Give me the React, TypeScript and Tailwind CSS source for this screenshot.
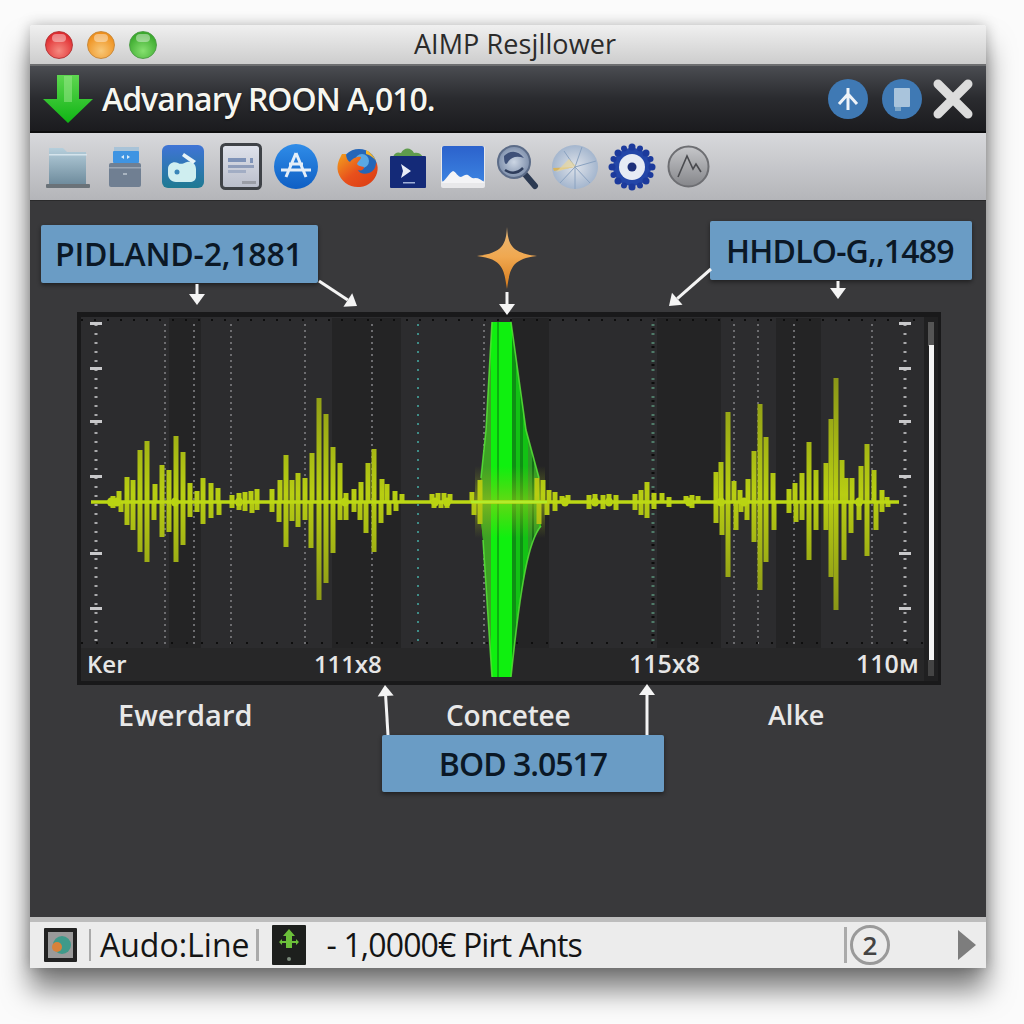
const F = "font-['Open_Sans','Noto_Sans',sans-serif]";

type B = [number, number];
const up: B[] = [[114,496],[120,491],[128,477],[134,480],[141,450],[148,441],[156,484],[163,465],[170,470],[177,436],[184,452],[191,483],[198,491],[204,478],[212,483],[219,488],[233,495],[240,493],[246,492],[252,491],[258,489],[273,489],[281,480],[287,455],[293,480],[299,473],[306,478],[313,453],[320,398],[327,414],[334,447],[341,463],[347,493],[355,489],[362,482],[369,463],[375,449],[383,479],[388,484],[396,491],[403,494],[433,494],[439,493],[445,493],[451,494],[473,492],[481,480],[538,478],[544,480],[550,490],[556,492],[563,496],[569,495],[590,495],[596,494],[604,495],[610,494],[617,495],[636,494],[642,490],[648,482],[655,493],[663,493],[670,497],[687,496],[693,495],[699,496],[717,472],[722,462],[729,412],[735,481],[741,490],[749,479],[755,451],[761,404],[767,437],[774,473],[790,489],[796,483],[803,473],[810,442],[817,470],[827,463],[832,419],[837,378],[843,460],[847,478],[853,478],[862,466],[868,444],[875,470],[883,490],[888,497]];
const down: B[] = [[114,508],[122,512],[128,525],[134,530],[141,552],[148,562],[155,520],[163,537],[170,532],[177,562],[184,545],[191,517],[198,512],[204,524],[212,518],[220,515],[233,508],[240,510],[246,511],[253,513],[258,510],[273,512],[280,522],[287,547],[293,521],[299,527],[306,520],[312,548],[320,600],[327,583],[334,553],[341,520],[347,520],[355,512],[361,520],[367,533],[375,552],[382,523],[390,515],[397,511],[435,508],[442,508],[448,508],[475,515],[481,524],[540,524],[548,515],[556,511],[590,509],[604,509],[617,510],[636,510],[642,515],[648,518],[655,509],[670,507],[693,508],[717,523],[723,535],[729,577],[737,530],[742,512],[748,520],[755,542],[761,590],[767,562],[775,530],[790,513],[797,522],[803,520],[810,560],[817,530],[827,530],[832,577],[837,610],[845,560],[852,533],[860,520],[868,556],[877,530],[883,512],[889,507]];
const bands: [number, number][] = [[170,32],[333,69],[513,37],[658,64],[777,45]];
const gridX = [166,195,232,306,373,485,735,759,795,873];
const scaleBig = [323,368,421,476,553,608];
const GREEN = "M493 322L512 322L527 430L540 478L542 526C530 540 522 580 512 677L493 677L484 540L480 502L482 478L487 430Z";

function Chart() {
  return (
    <svg viewBox="78 312 864 373" className="absolute inset-0 w-full h-full blur-[0.5px]">
      <defs>
        <linearGradient id="bar" gradientUnits="userSpaceOnUse" x1="0" y1="378" x2="0" y2="610">
          <stop offset="0" stopColor="#8a9618" />
          <stop offset="0.5" stopColor="#b8ce12" />
          <stop offset="1" stopColor="#8a9618" />
        </linearGradient>
        <linearGradient id="gA" x1="0" y1="0" x2="0" y2="1">
          <stop offset="0" stopColor="#9ab818" stopOpacity="0" />
          <stop offset="0.5" stopColor="#a8c818" stopOpacity="0.55" />
          <stop offset="1" stopColor="#9ab818" stopOpacity="0" />
        </linearGradient>
        <clipPath id="gc"><path d={GREEN} /></clipPath>
      </defs>
      <rect x="78" y="312" width="864" height="373" fill="#19191a" />
      <rect x="82" y="317" width="843" height="364" fill="#2c2c2e" />
      {bands.map(([x, w]) => <rect key={x} x={x} y="318" width={w} height="330" fill="#242425" />)}
      <rect x="82" y="648" width="843" height="33" fill="#272728" />
      {gridX.map((x) => <line key={x} x1={x} x2={x} y1="324" y2="644" stroke="#6d6d70" strokeWidth="2" strokeDasharray="2 4" />)}
      <line x1="419" x2="419" y1="324" y2="644" stroke="#3f8d88" strokeWidth="2" strokeDasharray="2 7" />
      <line x1="654" x2="654" y1="324" y2="644" stroke="#4f7a68" strokeWidth="3" strokeDasharray="2 7" />
      <line x1="654" x2="654" y1="328" y2="644" stroke="#0d0d0d" strokeWidth="3" strokeDasharray="2 16" />
      <line x1="82" x2="925" y1="320" y2="320" stroke="#0e0e0e" strokeWidth="2" strokeDasharray="2 11" />
      <line x1="82" x2="925" y1="643" y2="643" stroke="#0e0e0e" strokeWidth="2" strokeDasharray="2 13" />
      {[97, 906].map((x) => (
        <g key={x}>
          <line x1={x} x2={x} y1="324" y2="644" stroke="#a9a9ab" strokeWidth="3" strokeDasharray="2 7" />
          {scaleBig.map((y) => <rect key={y} x={x - 6} y={y - 1} width="12" height="3" fill="#c9c9cb" />)}
        </g>
      ))}
      <g clipPath="url(#gc)">
        <rect x="478" y="320" width="68" height="360" fill="#12c214" />
        <rect x="478" y="320" width="14" height="360" fill="#3da324" />
        <rect x="492" y="320" width="21" height="360" fill="#0ff00f" />
        <rect x="498" y="320" width="2" height="360" fill="#0cb010" />
        <rect x="513" y="320" width="4" height="360" fill="#0e8f14" />
        <rect x="521" y="320" width="3" height="360" fill="#0e8f14" />
        <rect x="529" y="320" width="11" height="360" fill="#2d9a26" />
        <rect x="533" y="320" width="2" height="360" fill="#146e18" />
      </g>
      <rect x="476" y="466" width="70" height="72" fill="url(#gA)" />
      <path d="M512 322L527 430L540 478M542 526C530 540 522 580 512 677M482 478L487 430L493 322M484 540L493 677" stroke="#58e038" strokeWidth="1.6" fill="none" opacity="0.85" />
      {up.map(([x, y]) => <rect key={x} x={x - 2.5} y={y} width="5" height={502 - y} fill="url(#bar)" />)}
      {down.map(([x, y]) => <rect key={x} x={x - 2.5} y="502" width="5" height={y - 502} fill="url(#bar)" />)}
      <line x1="92" x2="900" y1="502" y2="502" stroke="#bcd814" strokeWidth="3.5" />
      <line x1="472" x2="548" y1="502" y2="502" stroke="#b4ec2a" strokeWidth="2.5" />
      {[112,118,176,240,346,436,448,566,596,610,690,722,745,860].map((x) => <ellipse key={x} cx={x} cy="502" rx="4" ry="4.5" fill="#b9d412" />)}
      <rect x="925" y="317" width="14" height="364" fill="#202021" />
      <rect x="929" y="322" width="6" height="24" fill="#555" />
      <rect x="930" y="345" width="5" height="315" fill="#f4f4f4" />
      <rect x="929" y="660" width="6" height="16" fill="#444" />
    </svg>
  );
}

function Arrows() {
  const items: [number, number, number, number][] = [
    [197, 284, 197, 305],
    [319, 281, 357, 306],
    [507, 292, 507, 315],
    [711, 269, 669, 306],
    [838, 281, 838, 299],
    [388, 735, 385, 685],
    [647, 735, 647, 684],
  ];
  return (
    <svg viewBox="31 201 954 716" className="absolute inset-0 w-full h-full pointer-events-none">
      {items.map(([a, b, c, d]) => {
        const l = Math.hypot(c - a, d - b);
        const ux = (c - a) / l, uy = (d - b) / l;
        const bx = c - ux * 11, by = d - uy * 11;
        return (
          <g key={a}>
            <line x1={a} y1={b} x2={bx} y2={by} stroke="#f4f4f4" strokeWidth="3" />
            <polygon points={`${c},${d} ${bx - uy * 8},${by + ux * 8} ${bx + uy * 8},${by - ux * 8}`} fill="#f4f4f4" />
          </g>
        );
      })}
    </svg>
  );
}

function Light({ from, to, rim }: { from: string; to: string; rim: string }) {
  return (
    <div className="w-[28px] h-[28px] rounded-full relative border border-solid" style={{ background: `radial-gradient(circle at 50% 72%, ${to}, ${from} 75%)`, borderColor: rim }}>
      <div className="absolute left-[6px] top-[2px] w-[14px] h-[8px] rounded-full bg-white/40" />
    </div>
  );
}

function Star() {
  return (
    <svg viewBox="0 0 60 62" className="w-[60px] h-[62px]">
      <defs>
        <linearGradient id="st" x1="0" y1="0" x2="0" y2="1">
          <stop offset="0" stopColor="#e8b878" />
          <stop offset="0.48" stopColor="#f0a850" />
          <stop offset="1" stopColor="#d67a1a" />
        </linearGradient>
      </defs>
      <path d="M30 0C31 17 34 26 60 29C34 32 33 42 30 62C27 42 26 32 0 29C26 26 29 17 30 0Z" fill="url(#st)" />
    </svg>
  );
}

function ToolIcons() {
  return (
    <div className="flex items-center h-full">
      {/* folder laptop */}
      <svg viewBox="0 0 44 45" className="ml-[16px] w-[44px] h-[45px]">
        <defs><linearGradient id="f1" x1="0" y1="0" x2="0" y2="1"><stop offset="0" stopColor="#b6cfdc" /><stop offset="1" stopColor="#6f8c9d" /></linearGradient></defs>
        <path d="M3 4h14l4 4h19v32H3Z" fill="url(#f1)" />
        <rect x="3" y="10" width="38" height="1.5" fill="#d5e4ec" />
        <rect x="0" y="40" width="44" height="4" rx="1" fill="#6a7278" />
      </svg>
      {/* drive */}
      <svg viewBox="0 0 32 40" className="ml-[19px] w-[32px] h-[40px]">
        <rect x="5" y="0" width="25" height="6" fill="#a8c3d8" />
        <rect x="4" y="4" width="26" height="12" rx="1" fill="#3f94e2" />
        <path d="M12 10l3-2v4ZM18 8l3 2-3 2Z" fill="#dcecf8" />
        <rect x="0" y="16" width="32" height="24" rx="2" fill="#707f92" />
        <rect x="0" y="20" width="32" height="1.5" fill="#9aa6b4" />
        <rect x="14" y="26" width="4" height="2" fill="#a9b4c0" />
      </svg>
      {/* blue tile */}
      <svg viewBox="0 0 42 43" className="ml-[21px] w-[42px] h-[43px]">
        <defs><linearGradient id="t1" x1="0" y1="0" x2="0" y2="1"><stop offset="0" stopColor="#3f74d6" /><stop offset="1" stopColor="#1f7a92" /></linearGradient></defs>
        <rect width="42" height="43" rx="6" fill="url(#t1)" />
        <path d="M6 24c0-6 6-8 10-6 3 2 6 0 9-1 5-1 9 2 9 7v8c0 3-3 5-6 5H14c-5 0-8-4-8-8Z" fill="#cfeef0" />
        <path d="M22 8l12 8-3 3-11-8Z" fill="#e7f3f7" />
        <circle cx="15" cy="27" r="2.5" fill="#3a86b8" />
      </svg>
      {/* doc selected */}
      <svg viewBox="0 0 42 47" className="ml-[16px] w-[42px] h-[47px]">
        <defs><linearGradient id="d1" x1="0" y1="0" x2="0" y2="1"><stop offset="0" stopColor="#e0e3ec" /><stop offset="1" stopColor="#b9bdca" /></linearGradient></defs>
        <rect x="1.5" y="1.5" width="39" height="44" rx="4" fill="url(#d1)" stroke="#3f4247" strokeWidth="3" />
        <rect x="8" y="15" width="18" height="4" fill="#7f93b8" />
        <rect x="8" y="22" width="26" height="3" fill="#8f9dba" />
        <rect x="8" y="27" width="18" height="3" fill="#a2adc4" />
        <rect x="30" y="15" width="3" height="5" fill="#7f93b8" />
        <rect x="22" y="38" width="14" height="3" fill="#9a9da6" />
      </svg>
      {/* app store */}
      <svg viewBox="0 0 44 45" className="ml-[12px] w-[44px] h-[45px]">
        <defs><linearGradient id="a1" x1="0" y1="0" x2="0" y2="1"><stop offset="0" stopColor="#2f8ce8" /><stop offset="1" stopColor="#0f5fc4" /></linearGradient></defs>
        <ellipse cx="22" cy="22.5" rx="22" ry="22.5" fill="url(#a1)" />
        <path d="M22 9L12 33M22 9L32 33M7 26H37M15 20l14 0" stroke="#e4eef8" strokeWidth="3" fill="none" />
      </svg>
      {/* firefox */}
      <svg viewBox="0 0 42 42" className="ml-[18px] w-[42px] h-[42px]">
        <defs><linearGradient id="ff" x1="0" y1="0" x2="1" y2="1"><stop offset="0" stopColor="#f2a21e" /><stop offset="0.5" stopColor="#e8501c" /><stop offset="1" stopColor="#d93a12" /></linearGradient></defs>
        <circle cx="23" cy="21" r="18" fill="#2466b8" />
        <circle cx="26" cy="15" r="7" fill="#5aa8e4" />
        <path d="M6 8C4 12 0 18 2 26c3 10 12 16 22 15 9-1 15-7 17-14 1-4 1-8-1-11 0 5-2 9-7 11-5 2-10 0-11-3 3 1 6 0 6-3-3-1-6-1-7-3 1-3 4-4 4-7-4-1-9 2-11 5-2-1-4-4-4-8Z" fill="url(#ff)" />
        <path d="M30 4c4 2 8 6 10 11-2-3-6-6-10-7Z" fill="#f5b52a" />
      </svg>
      {/* powershell */}
      <svg viewBox="0 0 36 42" className="ml-[12px] w-[36px] h-[42px]">
        <path d="M3 11c2-5 5-5 8-4 3-6 10-6 13 0 3-1 7 0 9 4Z" fill="#5f9c4c" />
        <rect y="10" width="36" height="32" rx="1" fill="#142a78" />
        <path d="M11 18l10 7-10 7 2-7Z" fill="#e8edf8" />
        <rect x="13" y="36" width="12" height="1.5" fill="#9fb0d8" />
      </svg>
      {/* photo */}
      <svg viewBox="0 0 44 42" className="ml-[15px] w-[44px] h-[42px]">
        <defs><linearGradient id="p1" x1="0" y1="0" x2="0" y2="1"><stop offset="0" stopColor="#2c62cc" /><stop offset="1" stopColor="#3b82e0" /></linearGradient></defs>
        <rect y="0" width="44" height="42" rx="2" fill="#e8e8ea" />
        <rect x="1" y="0" width="42" height="36" rx="2" fill="url(#p1)" />
        <path d="M0 37c5-3 8-10 12-12 3 1 5 6 8 6 3-1 4-3 7-2 3 2 4 4 7 3 4 0 7 2 10 5Z" fill="#f4f4f6" />
      </svg>
      {/* magnifier */}
      <svg viewBox="0 0 42 46" className="ml-[12px] w-[42px] h-[46px]">
        <defs><radialGradient id="m1"><stop offset="0" stopColor="#ccd6e4" /><stop offset="1" stopColor="#7f90ac" /></radialGradient></defs>
        <path d="M26 28L38 42" stroke="#2c3a52" strokeWidth="6" strokeLinecap="round" />
        <circle cx="17" cy="18" r="16" fill="url(#m1)" stroke="#5c6c88" strokeWidth="2" />
        <path d="M7 12c6-6 14-6 20 2-6-2-12-2-16 4-2 4-4 2-4-6Z" fill="#3e5078" />
        <path d="M8 26c6 4 12 4 18-2" stroke="#2e3d5c" strokeWidth="2.5" fill="none" />
      </svg>
      {/* gauge */}
      <svg viewBox="0 0 46 44" className="ml-[13px] w-[46px] h-[44px]">
        <defs><radialGradient id="g1"><stop offset="0" stopColor="#dfe3ea" /><stop offset="1" stopColor="#a4b6ce" /></radialGradient></defs>
        <ellipse cx="23" cy="22" rx="23" ry="22" fill="url(#g1)" />
        <path d="M23 22L23 44M23 22L8 38M23 22L38 38M23 22L12 6M23 22L30 2M23 22L44 16" stroke="#8aa2c0" strokeWidth="1" />
        <path d="M23 22L2 26L1 23Z" fill="#d8b45e" />
        <path d="M24 21L4 27L17 14Z" fill="#e8d69a" opacity="0.7" />
      </svg>
      {/* gear */}
      <svg viewBox="0 0 48 48" className="ml-[10px] w-[48px] h-[48px]">
        <circle cx="24" cy="24" r="19" fill="#2346a8" />
        <g fill="#1c3a9c">
          <circle cx="24" cy="4" r="3.5" /><circle cx="24" cy="44" r="3.5" /><circle cx="4" cy="24" r="3.5" /><circle cx="44" cy="24" r="3.5" />
          <circle cx="10" cy="10" r="3.5" /><circle cx="38" cy="10" r="3.5" /><circle cx="10" cy="38" r="3.5" /><circle cx="38" cy="38" r="3.5" />
          <circle cx="16" cy="5.5" r="3" /><circle cx="32" cy="5.5" r="3" /><circle cx="16" cy="42.5" r="3" /><circle cx="32" cy="42.5" r="3" />
          <circle cx="5.5" cy="16" r="3" /><circle cx="42.5" cy="16" r="3" /><circle cx="5.5" cy="32" r="3" /><circle cx="42.5" cy="32" r="3" />
        </g>
        <circle cx="24" cy="24" r="13" fill="#e6ebf4" />
        <circle cx="24" cy="24" r="4.5" fill="#1c2f7a" />
      </svg>
      {/* grey circle */}
      <svg viewBox="0 0 43 43" className="ml-[11px] w-[43px] h-[43px]">
        <defs><linearGradient id="c1" x1="0" y1="0" x2="0" y2="1"><stop offset="0" stopColor="#c6c7ca" /><stop offset="1" stopColor="#85868a" /></linearGradient></defs>
        <circle cx="21.5" cy="21.5" r="20" fill="url(#c1)" stroke="#6d6e72" strokeWidth="2" />
        <path d="M11 32L20 11L26 24L29 19L34 27" stroke="#4a4b4f" strokeWidth="1.6" fill="none" />
      </svg>
    </div>
  );
}

const callout = "bg-[#6a9cc5] rounded-[2px] shadow-[0_2px_4px_rgba(0,0,0,0.45)] flex items-center text-[#0b1826] font-semibold";

export default function App() {
  return (
    <div className={`w-[1024px] h-[1024px] bg-[#fbfbfb] pt-[25px] pl-[30px] overflow-hidden ${F}`}>
      <div className="w-[956px] h-[943px] flex flex-col rounded-t-[3px] shadow-[0_22px_28px_rgba(0,0,0,0.5),0_0_14px_rgba(0,0,0,0.25)]">
        {/* title bar */}
        <div className="h-[39px] shrink-0 relative flex items-center rounded-t-[3px] bg-gradient-to-b from-[#f0f0f0] to-[#cdcdcd] pl-[15px] gap-[14px]">
          <Light from="#e02a2e" to="#f58a80" rim="#b5383a" />
          <Light from="#ee8f1c" to="#f8c878" rim="#c98a3c" />
          <Light from="#3aa92c" to="#86e070" rim="#4f9f48" />
          <div className="absolute inset-0 flex items-center justify-center pl-[14px] text-[27px] text-[#2b2b2b] font-medium tracking-[0.1px]">AIMP Resjllower</div>
        </div>
        {/* header */}
        <div className="h-[69px] shrink-0 flex items-center border-t-2 border-b-2 border-solid border-t-[#6d6e70] border-b-[#0d0d0e] bg-gradient-to-b from-[#4b4d52] via-[#2a2b2f] to-[#1b1b1e] pl-[13px] pr-[13px]">
          <svg viewBox="0 0 50 48" className="w-[50px] h-[48px]">
            <defs><linearGradient id="dn" x1="0" y1="0" x2="0" y2="1"><stop offset="0" stopColor="#5ed650" /><stop offset="1" stopColor="#0fb414" /></linearGradient></defs>
            <path d="M14 0H36V24H50L25 48L0 24H14Z" fill="url(#dn)" />
            <rect x="21" y="1" width="8" height="26" fill="#9ce88e" opacity="0.5" />
          </svg>
          <div className="ml-[9px] text-[32px] font-semibold text-[#f6f6f0] tracking-[-1px] [text-shadow:0_1px_2px_rgba(0,0,0,0.6)]">Advanary ROON A,010.</div>
          <div className="ml-auto flex items-center">
            <svg viewBox="0 0 40 40" className="w-[40px] h-[40px]">
              <circle cx="20" cy="20" r="20" fill="#3f79b4" />
              <path d="M20 9L20 31M20 15L11 25M20 15L29 25" stroke="#eef3f8" strokeWidth="3" fill="none" />
            </svg>
            <svg viewBox="0 0 40 40" className="ml-[14px] w-[40px] h-[40px]">
              <circle cx="20" cy="20" r="20" fill="#3f79b4" />
              <rect x="12" y="9" width="16" height="19" rx="1" fill="#a9c4dc" />
              <rect x="13" y="28" width="6" height="4" fill="#7ea6c8" />
            </svg>
            <svg viewBox="0 0 40 40" className="ml-[11px] w-[40px] h-[40px]">
              <path d="M5 5L35 35M35 5L5 35" stroke="#dcdcdc" strokeWidth="9" strokeLinecap="round" />
            </svg>
          </div>
        </div>
        {/* toolbar */}
        <div className="h-[67px] shrink-0 bg-gradient-to-b from-[#d8d9dc] to-[#b4b5b9]">
          <ToolIcons />
        </div>
        {/* content */}
        <div className="relative flex-1 min-h-0 bg-[#39393b] border-t border-solid border-t-[#2a2a2b] flex flex-col">
          <div className="h-[111px] shrink-0 flex items-start pl-[11px] pr-[14px]">
            <div className={`${callout} mt-[24px] w-[277px] h-[58px] pl-[14px] text-[32px] tracking-[-0.2px]`}>PIDLAND-2,1881</div>
            <div className="mt-[26px] ml-[159px]"><Star /></div>
            <div className={`${callout} mt-[20px] ml-auto w-[262px] h-[59px] pl-[16px] text-[32px] tracking-[-0.8px]`}>HHDLO-G,,1489</div>
          </div>
          <div className="relative shrink-0 ml-[47px] w-[864px] h-[373px]">
            <Chart />
            <div className="absolute left-0 right-0 bottom-[2px] h-[38px] flex items-center pl-[10px] font-semibold text-[#e6e6e6]">
              <span className="w-[227px] text-[24px]">Ker</span>
              <span className="w-[315px] text-[24px] tracking-[-0.1px]">111x8</span>
              <span className="w-[227px] text-[25px]">115x8</span>
              <span className="text-[25px]">110м</span>
            </div>
          </div>
          <div className="h-[50px] shrink-0 flex items-center pt-[10px] pl-[88px] font-semibold text-[#e8e8e8]">
            <span className="w-[328px] text-[29px]">Ewerdard</span>
            <span className="w-[322px] text-[28px] tracking-[-0.2px]">Concetee</span>
            <span className="text-[27px]">Alke</span>
          </div>
          <div className="pl-[352px]">
            <div className={`${callout} w-[282px] h-[57px] justify-center text-[32px] tracking-[-1px]`}>BOD 3.0517</div>
          </div>
          <Arrows />
        </div>
        {/* status bar */}
        <div className="h-[51px] shrink-0 flex items-center border-t-[5px] border-solid border-t-[#bdbdbd] bg-[#ececec] pl-[14px] pr-[10px] text-[#141414]">
          <svg viewBox="0 0 33 34" className="w-[33px] h-[34px]">
            <rect width="33" height="34" rx="1" fill="#222" />
            <rect x="4" y="4" width="25" height="26" fill="#9a9a9a" />
            <circle cx="18" cy="17" r="9" fill="#3f9a8a" />
            <circle cx="13" cy="19" r="5" fill="#d8823a" />
          </svg>
          <div className="ml-[12px] w-[2px] h-[32px] bg-[#aaaaaa]" />
          <div className="ml-[9px] text-[32px] font-medium">Audo:Line</div>
          <div className="ml-[7px] w-[3px] h-[32px] bg-[#aaaaaa]" />
          <svg viewBox="0 0 34 40" className="ml-[13px] w-[34px] h-[40px]">
            <rect width="34" height="40" rx="1" fill="#1d1f1d" />
            <path d="M17 4l6 7h-3v5h4v-2l3 3-3 3v-2h-4v5h-6v-5h-4v2l-3-3 3-3v2h4v-5h-3Z" fill="#6cc03a" />
            <circle cx="17" cy="34" r="2" fill="#7a8a7a" />
          </svg>
          <div className="ml-[20px] text-[32px] font-medium tracking-[-0.85px]">- 1,0000€ Pirt Ants</div>
          <div className="ml-auto w-[3px] h-[36px] bg-[#aaaaaa]" />
          <div className="ml-[3px] w-[40px] h-[40px] rounded-full border-[3px] border-solid border-[#9a9a9a] flex items-center justify-center text-[26px] font-semibold text-[#444]">2</div>
          <svg viewBox="0 0 18 30" className="ml-[68px] w-[18px] h-[30px]">
            <path d="M0 0L18 15L0 30Z" fill="#7d7d7d" />
          </svg>
        </div>
      </div>
    </div>
  );
}
